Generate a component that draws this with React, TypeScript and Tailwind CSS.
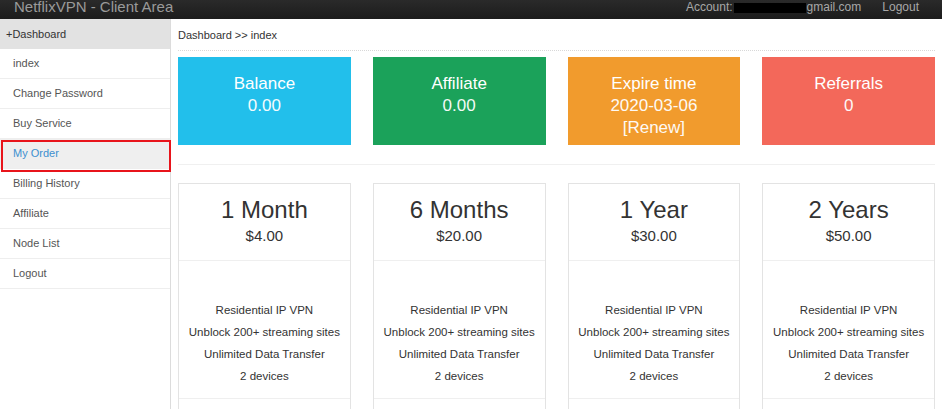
import { Fragment } from "react";

type StatBox = {
  label: string;
  lines: string[];
  color: string;
};

type Plan = {
  title: string;
  price: string;
};

const menu = ["index", "Change Password", "Buy Service", "My Order", "Billing History", "Affiliate", "Node List", "Logout"];

const stats: StatBox[] = [
  { label: "Balance", lines: ["0.00"], color: "bg-[#22bfeb]" },
  { label: "Affiliate", lines: ["0.00"], color: "bg-[#1ba25a]" },
  { label: "Expire time", lines: ["2020-03-06", "[Renew]"], color: "bg-[#f19b2d]" },
  { label: "Referrals", lines: ["0"], color: "bg-[#f3685a]" },
];

const plans: Plan[] = [
  { title: "1 Month", price: "$4.00" },
  { title: "6 Months", price: "$20.00" },
  { title: "1 Year", price: "$30.00" },
  { title: "2 Years", price: "$50.00" },
];

const features = ["Residential IP VPN", "Unblock 200+ streaming sites", "Unlimited Data Transfer", "2 devices"];

function TopBar() {
  return (
    <div className="flex h-[19px] items-end justify-between overflow-hidden bg-gradient-to-b from-[#2a2a2a] to-[#1c1c1c] pb-[5px] pl-[14px] pr-[23px]">
      <span className="text-[15px] leading-[15px] text-[#9a9a9a]">NetflixVPN - Client Area</span>
      <div className="flex items-end pb-[1px] text-[12px] leading-[12px] text-[#a8a8a8]">
        <span>Account:</span>
        <span className="mx-[1px] inline-block h-[10px] w-[72px] bg-black" />
        <span>gmail.com</span>
        <span className="ml-[21px]">Logout</span>
      </div>
    </div>
  );
}

function Sidebar() {
  return (
    <aside className="w-[171px] shrink-0 border-r border-[#dcdcdc] bg-white">
      <div className="flex h-[30px] items-center bg-[#e2e2e2] pl-[6px] text-[11px] text-[#333]">+Dashboard</div>
      {menu.map((item) => {
        const active = item === "My Order";
        return (
          <div
            key={item}
            className={
              active
                ? "relative flex h-[30px] items-center border-b border-[#eee] bg-[#efefef] pl-[13px] text-[11px] text-[#3d8fcf]"
                : "flex h-[30px] items-center border-b border-[#eee] pl-[13px] text-[11px] text-[#555]"
            }
          >
            {item}
            {active && <span className="absolute left-[1px] right-[-1px] top-[1px] bottom-[-4px] border-2 border-[#e8141b]" />}
          </div>
        );
      })}
    </aside>
  );
}

function Stats() {
  return (
    <div className="grid grid-cols-4 gap-[22px]">
      {stats.map((stat) => (
        <div key={stat.label} className={`${stat.color} h-[88px] pt-[16px] text-center text-[17px] leading-[22px] text-white`}>
          <div>{stat.label}</div>
          {stat.lines.map((line) => (
            <div key={line} className="opacity-95">
              {line}
            </div>
          ))}
        </div>
      ))}
    </div>
  );
}

function Plans() {
  return (
    <div className="grid grid-cols-4 gap-[22px]">
      {plans.map((plan) => (
        <div key={plan.title} className="h-[240px] border border-[#e3e3e3] bg-white text-center text-[#333]">
          <div className="h-[77px] border-b border-[#efefef] pt-[12px]">
            <div className="text-[24px] leading-[28px] text-[#333]">{plan.title}</div>
            <div className="mt-[2px] text-[15px] leading-[20px]">{plan.price}</div>
          </div>
          <div className="h-[138px] border-b border-[#efefef] pt-[38px] text-[11.5px] leading-[22px]">
            {features.map((feature) => (
              <Fragment key={feature}>
                <div>{feature}</div>
              </Fragment>
            ))}
          </div>
        </div>
      ))}
    </div>
  );
}

export default function App() {
  return (
    <div className="h-[409px] overflow-hidden bg-white font-['Liberation_Sans',Arial,sans-serif]">
      <TopBar />
      <div className="flex h-[390px]">
        <Sidebar />
        <main className="min-w-0 flex-1 px-[7px] pt-[2px]">
          <div className="border-b border-dotted border-[#d8d8d8] pb-[8px] pt-[8px] text-[11px] leading-[13px] text-[#333]">
            Dashboard &gt;&gt; index
          </div>
          <div className="pt-[6px]">
            <Stats />
          </div>
          <div className="mt-[19px] border-t border-[#f0f0f0]" />
          <div className="pt-[18px]">
            <Plans />
          </div>
        </main>
      </div>
    </div>
  );
}
